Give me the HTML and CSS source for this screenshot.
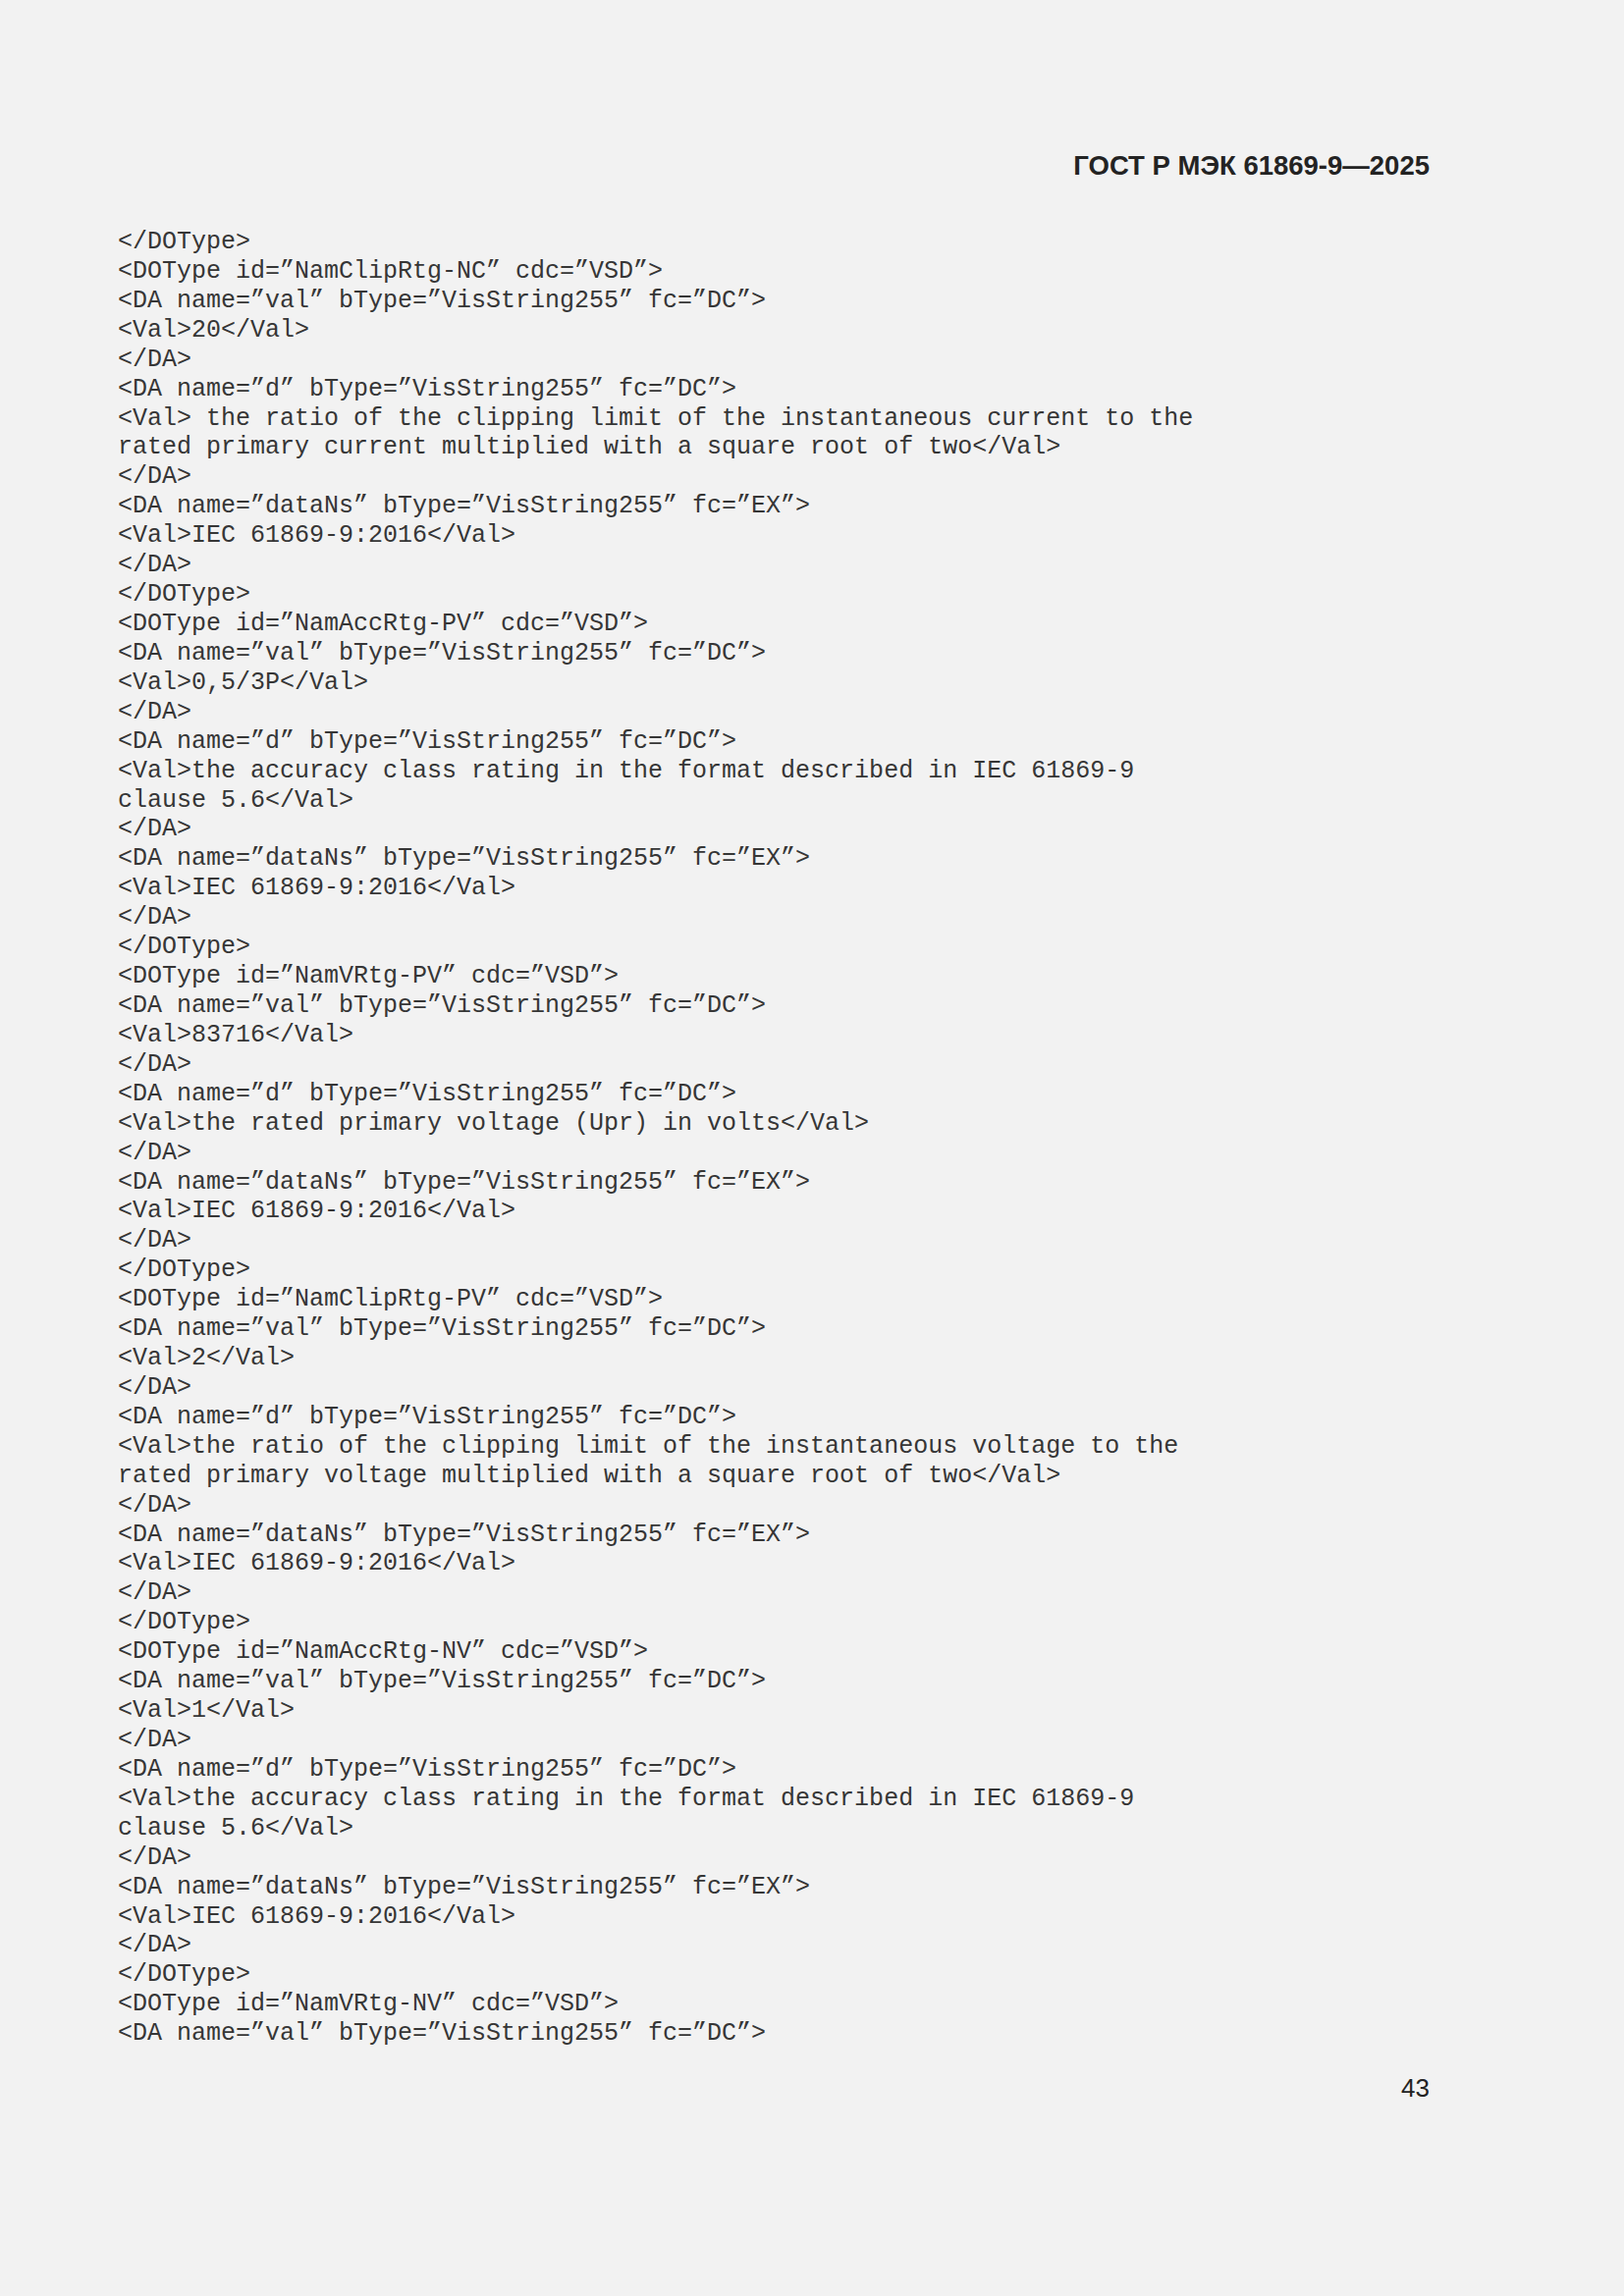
FILE: index.html
```html
<!DOCTYPE html>
<html lang="ru">
<head>
<meta charset="utf-8">
<title>ГОСТ Р МЭК 61869-9—2025</title>
<link rel="stylesheet" href="styles.css">
</head>
<body>
<div class="page">
<header class="doc-header">ГОСТ Р МЭК 61869-9—2025</header>
<pre class="code">&lt;/DOType&gt;
&lt;DOType id=”NamClipRtg-NC” cdc=”VSD”&gt;
&lt;DA name=”val” bType=”VisString255” fc=”DC”&gt;
&lt;Val&gt;20&lt;/Val&gt;
&lt;/DA&gt;
&lt;DA name=”d” bType=”VisString255” fc=”DC”&gt;
&lt;Val&gt; the ratio of the clipping limit of the instantaneous current to the
rated primary current multiplied with a square root of two&lt;/Val&gt;
&lt;/DA&gt;
&lt;DA name=”dataNs” bType=”VisString255” fc=”EX”&gt;
&lt;Val&gt;IEC 61869-9:2016&lt;/Val&gt;
&lt;/DA&gt;
&lt;/DOType&gt;
&lt;DOType id=”NamAccRtg-PV” cdc=”VSD”&gt;
&lt;DA name=”val” bType=”VisString255” fc=”DC”&gt;
&lt;Val&gt;0,5/3P&lt;/Val&gt;
&lt;/DA&gt;
&lt;DA name=”d” bType=”VisString255” fc=”DC”&gt;
&lt;Val&gt;the accuracy class rating in the format described in IEC 61869-9
clause 5.6&lt;/Val&gt;
&lt;/DA&gt;
&lt;DA name=”dataNs” bType=”VisString255” fc=”EX”&gt;
&lt;Val&gt;IEC 61869-9:2016&lt;/Val&gt;
&lt;/DA&gt;
&lt;/DOType&gt;
&lt;DOType id=”NamVRtg-PV” cdc=”VSD”&gt;
&lt;DA name=”val” bType=”VisString255” fc=”DC”&gt;
&lt;Val&gt;83716&lt;/Val&gt;
&lt;/DA&gt;
&lt;DA name=”d” bType=”VisString255” fc=”DC”&gt;
&lt;Val&gt;the rated primary voltage (Upr) in volts&lt;/Val&gt;
&lt;/DA&gt;
&lt;DA name=”dataNs” bType=”VisString255” fc=”EX”&gt;
&lt;Val&gt;IEC 61869-9:2016&lt;/Val&gt;
&lt;/DA&gt;
&lt;/DOType&gt;
&lt;DOType id=”NamClipRtg-PV” cdc=”VSD”&gt;
&lt;DA name=”val” bType=”VisString255” fc=”DC”&gt;
&lt;Val&gt;2&lt;/Val&gt;
&lt;/DA&gt;
&lt;DA name=”d” bType=”VisString255” fc=”DC”&gt;
&lt;Val&gt;the ratio of the clipping limit of the instantaneous voltage to the
rated primary voltage multiplied with a square root of two&lt;/Val&gt;
&lt;/DA&gt;
&lt;DA name=”dataNs” bType=”VisString255” fc=”EX”&gt;
&lt;Val&gt;IEC 61869-9:2016&lt;/Val&gt;
&lt;/DA&gt;
&lt;/DOType&gt;
&lt;DOType id=”NamAccRtg-NV” cdc=”VSD”&gt;
&lt;DA name=”val” bType=”VisString255” fc=”DC”&gt;
&lt;Val&gt;1&lt;/Val&gt;
&lt;/DA&gt;
&lt;DA name=”d” bType=”VisString255” fc=”DC”&gt;
&lt;Val&gt;the accuracy class rating in the format described in IEC 61869-9
clause 5.6&lt;/Val&gt;
&lt;/DA&gt;
&lt;DA name=”dataNs” bType=”VisString255” fc=”EX”&gt;
&lt;Val&gt;IEC 61869-9:2016&lt;/Val&gt;
&lt;/DA&gt;
&lt;/DOType&gt;
&lt;DOType id=”NamVRtg-NV” cdc=”VSD”&gt;
&lt;DA name=”val” bType=”VisString255” fc=”DC”&gt;</pre>
<footer class="page-number">43</footer>
</div>
</body>
</html>
```

FILE: styles.css
```css
html, body {
  margin: 0;
  padding: 0;
  background: #f2f2f2;
}

.page {
  width: 1654px;
  min-height: 2339px;
  box-sizing: border-box;
  padding: 154px 198px 0 120px;
  display: flex;
  flex-direction: column;
  color: #222222;
}

.doc-header {
  font-family: "Liberation Sans", Arial, sans-serif;
  font-weight: bold;
  font-size: 27.5px;
  line-height: 30px;
  text-align: right;
  color: #232323;
}

.code {
  margin: 48px 0 0 0;
  font-family: "Liberation Mono", "Courier New", monospace;
  font-size: 25px;
  line-height: 29.92px;
  color: #363636;
  white-space: pre;
}

.page-number {
  margin-top: 25px;
  font-family: "Liberation Sans", Arial, sans-serif;
  font-size: 26px;
  line-height: 30px;
  text-align: right;
  color: #232323;
}
```
